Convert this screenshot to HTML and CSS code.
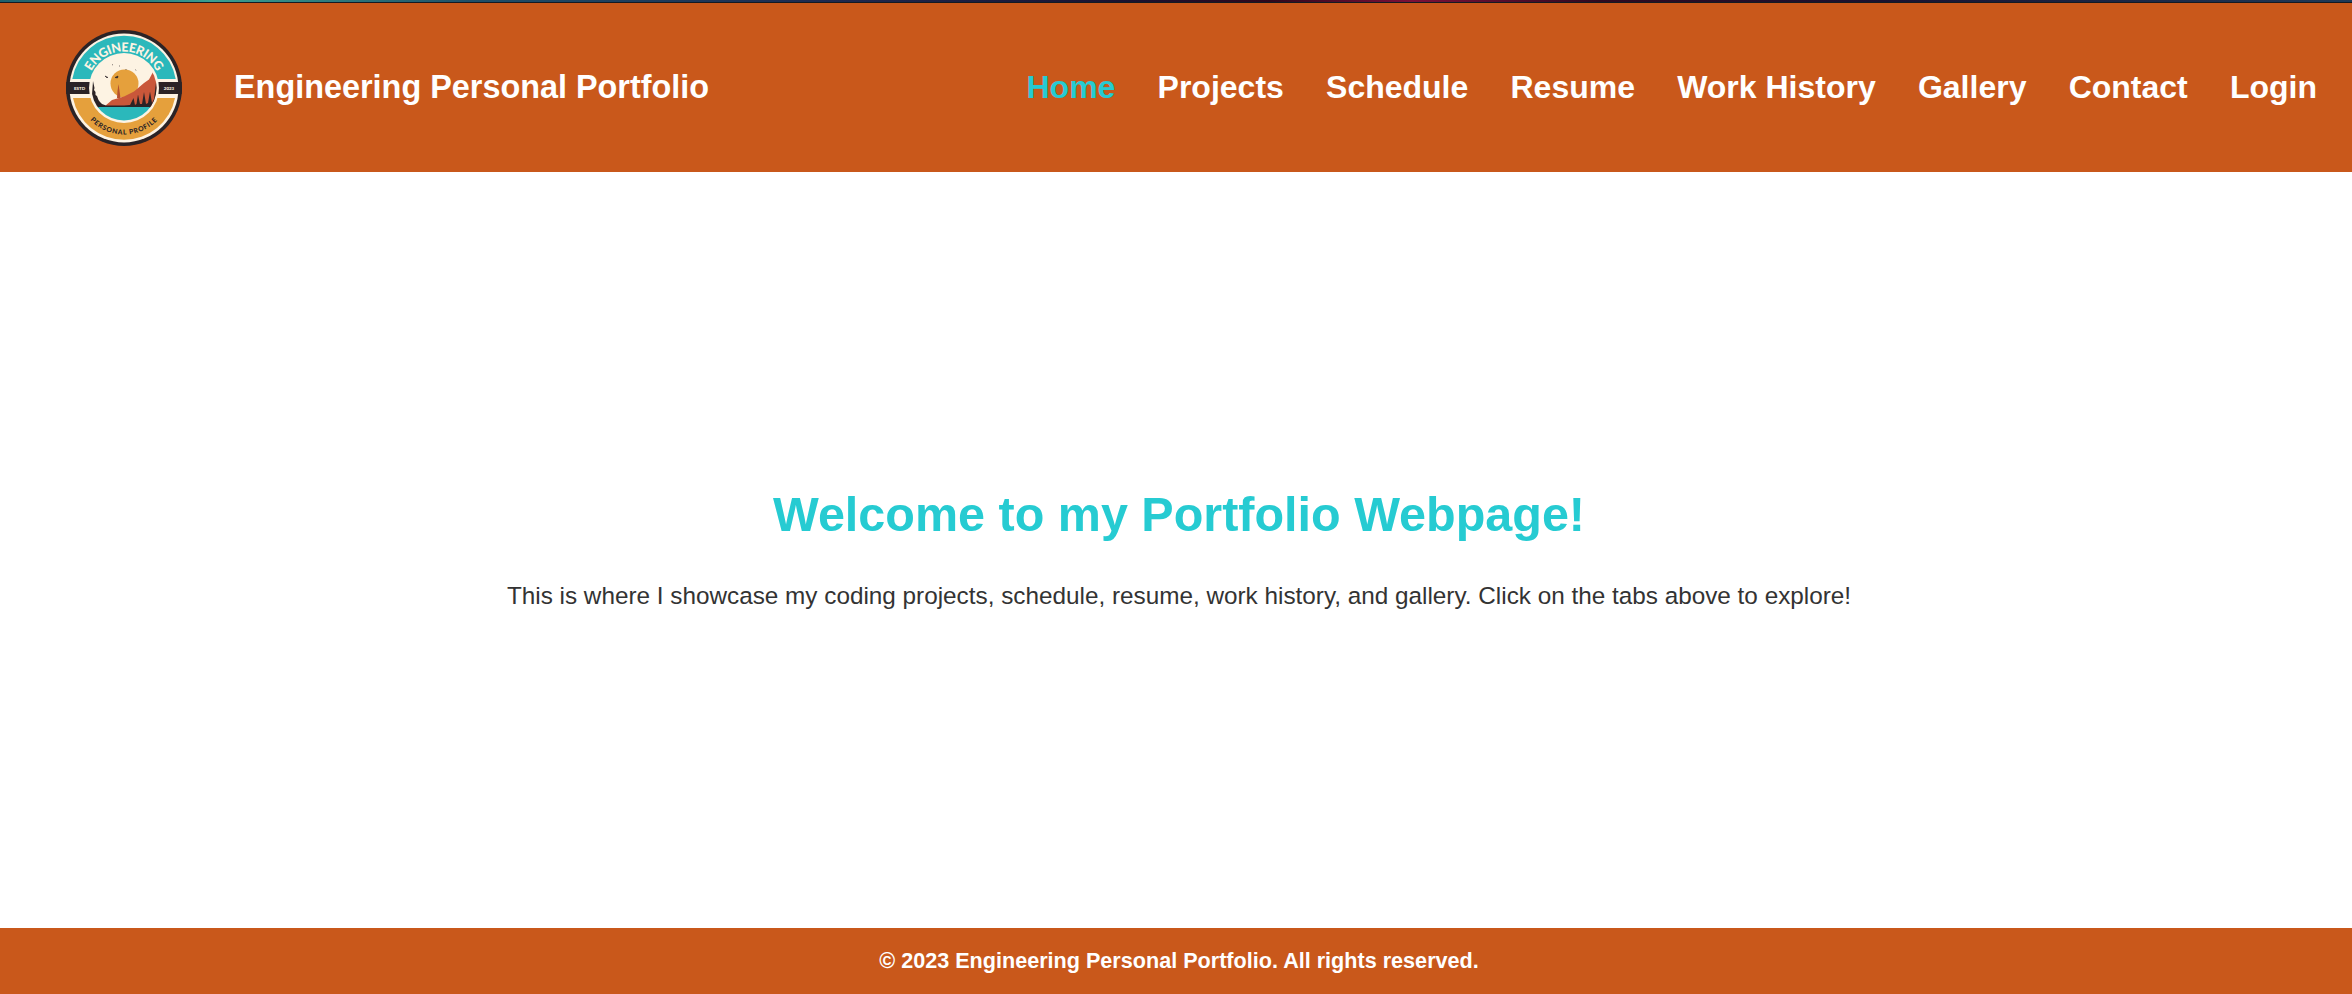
FILE: index.html
```html
<!DOCTYPE html>
<html lang="en">
<head>
    <meta charset="UTF-8"/>
    <meta name="viewport" content="width=device-width, initial-scale=1.0"/>
    <title>Engineering Personal Portfolio</title>
    <link rel="stylesheet" href="styles.css">
</head>
<body>
    <div class="strip"></div>
    <header class="top">
        <div class="brand">
            <svg class="logo" viewBox="0 0 120 120" width="120" height="120">
                <defs>
                    <clipPath id="scene"><circle cx="60" cy="60" r="32.5"/></clipPath>
                    <clipPath id="badge"><circle cx="60" cy="60" r="58"/></clipPath>
                    <path id="arcTop" d="M23.500 60 A36.500 36.500 0 0 1 96.500 60"/>
                    <path id="arcBottom" d="M13.500 60 A46.500 46.500 0 0 0 106.500 60"/>
                </defs>
                <circle cx="60" cy="60" r="58" fill="#2b2326"/>
                <circle cx="60" cy="60" r="54.500" fill="#fdf3e3"/>
                <path d="M8.300 51 A52.500 52.500 0 0 1 111.700 51 Z" fill="#2bb8bb"/>
                <path d="M9 70 A52 52 0 0 0 111 70 Z" fill="#e5a03c"/>
                <rect x="2" y="54" width="116" height="12" fill="#2b2326" clip-path="url(#badge)"/>
                <circle cx="60" cy="60" r="35" fill="#fdf3e3"/>
                <g clip-path="url(#scene)">
                    <circle cx="60.500" cy="55.500" r="14" fill="#e5a03c"/>
                    <path d="M53 70 L53.500 63 L54.500 56 L55.500 63 L56.500 70 Z" fill="#b5502f"/>
                    <path d="M41 78 L48 72 L60 68.500 L70 63.500 L80 55 L85 51.500 L89.500 43 L92 50 L94 56 V80 H41 Z" fill="#c9573a"/>
                    <path d="M27 80 L29 53 L30.500 60 L30 62 L31.500 64 L31.500 67 L33 68 L34.500 72 L36 74 L38 76 L42 77.500 H60 L66 77 L69.500 70 L71 77 L72.500 76 L74 66.500 L76 76 L78 76 L80 64 L82 76 L84 75 L86 63.500 L88 75 L90 71 L91 63 L92.500 50 L96 50 V80 Z" fill="#2b2326"/>
                    <rect x="20" y="79" width="80" height="16" fill="#2bb8bb"/>
                    <path d="M41 48 l3 1.500 l-1.500 0 Z M51 49.500 l3 -1.500 l-0.500 2 Z M48 36.500 l1 0.500 M55 38 l1 0 M61.500 41.500 l1 0 M71.500 41.500 l0.500 1" stroke="#2b2326" stroke-width="0.6" fill="#2b2326"/>
                </g>
                <text class="logo-top"><textPath href="#arcTop" startOffset="50%" text-anchor="middle">ENGINEERING</textPath></text>
                <text class="logo-bottom"><textPath href="#arcBottom" startOffset="50%" text-anchor="middle">PERSONAL PROFILE</textPath></text>
                <text class="logo-side" x="15.500" y="61.500" text-anchor="middle">ESTD</text>
                <text class="logo-side" x="105" y="61.500" text-anchor="middle">2023</text>
            </svg>
            <span class="brand-name">Engineering Personal Portfolio</span>
        </div>
        <nav class="menu">
            <a class="active" href="#">Home</a>
            <a href="#">Projects</a>
            <a href="#">Schedule</a>
            <a href="#">Resume</a>
            <a href="#">Work History</a>
            <a href="#">Gallery</a>
            <a href="#">Contact</a>
            <a href="#">Login</a>
        </nav>
    </header>
    <main class="welcome">
        <h1>Welcome to my Portfolio Webpage!</h1>
        <p>This is where I showcase my coding projects, schedule, resume, work history, and gallery. Click on the tabs above to explore!</p>
    </main>
    <footer class="bottom">© 2023 Engineering Personal Portfolio. All rights reserved.</footer>
</body>
</html>
```

FILE: styles.css
```css
* {margin: 0; padding: 0; box-sizing: border-box}
html, body {height: 100%}
body {display: flex; flex-direction: column; font-family: "Liberation Sans", Arial, sans-serif; background-color: #fff; color: #333; overflow: hidden}

.strip {height: 3px; flex: none; border-bottom: 1px solid #141a22; background: linear-gradient(90deg, #1f5f6b 0%, #2a7f80 6%, #3a9f90 9%, #1f4f68 20%, #1f2a50 35%, #1a1230 48%, #30081c 54%, #7c1038 60%, #300a20 68%, #1a1230 80%, #1f3a58 100%)}

.top {height: 169px; flex: none; display: flex; align-items: center; justify-content: space-between; padding: 0 35px 0 64px; background-color: #c9581b}
.brand {display: flex; align-items: center; gap: 50px}
.logo {display: block; flex: none}
.logo-top {font: 900 12.500px "Lato", sans-serif; fill: #fdf3e3; letter-spacing: -0.4px}
.logo-bottom {font: 900 6.800px "Lato", sans-serif; fill: #2b2326; letter-spacing: 0.7px}
.logo-side {font: 900 4.500px "Lato", sans-serif; fill: #fdf3e3}
.brand-name {font-size: 32.400px; font-weight: bold; color: #fff}

.menu {display: flex; gap: 42.200px}
.menu a {font-size: 32px; font-weight: bold; color: #fff; text-decoration: none}
.menu a.active {color: #26cbd2}

.welcome {flex: 1; display: flex; flex-direction: column; align-items: center; justify-content: center; text-align: center; padding: 0 0 4px 6px}
.welcome h1 {font-size: 48.500px; color: #26cbd2; margin-bottom: 40px}
.welcome p {font-size: 24.300px}

.bottom {height: 66px; flex: none; display: flex; align-items: center; justify-content: center; padding-left: 6px; background-color: #c9581b; color: #fff; font-size: 21.600px; font-weight: bold}
```
